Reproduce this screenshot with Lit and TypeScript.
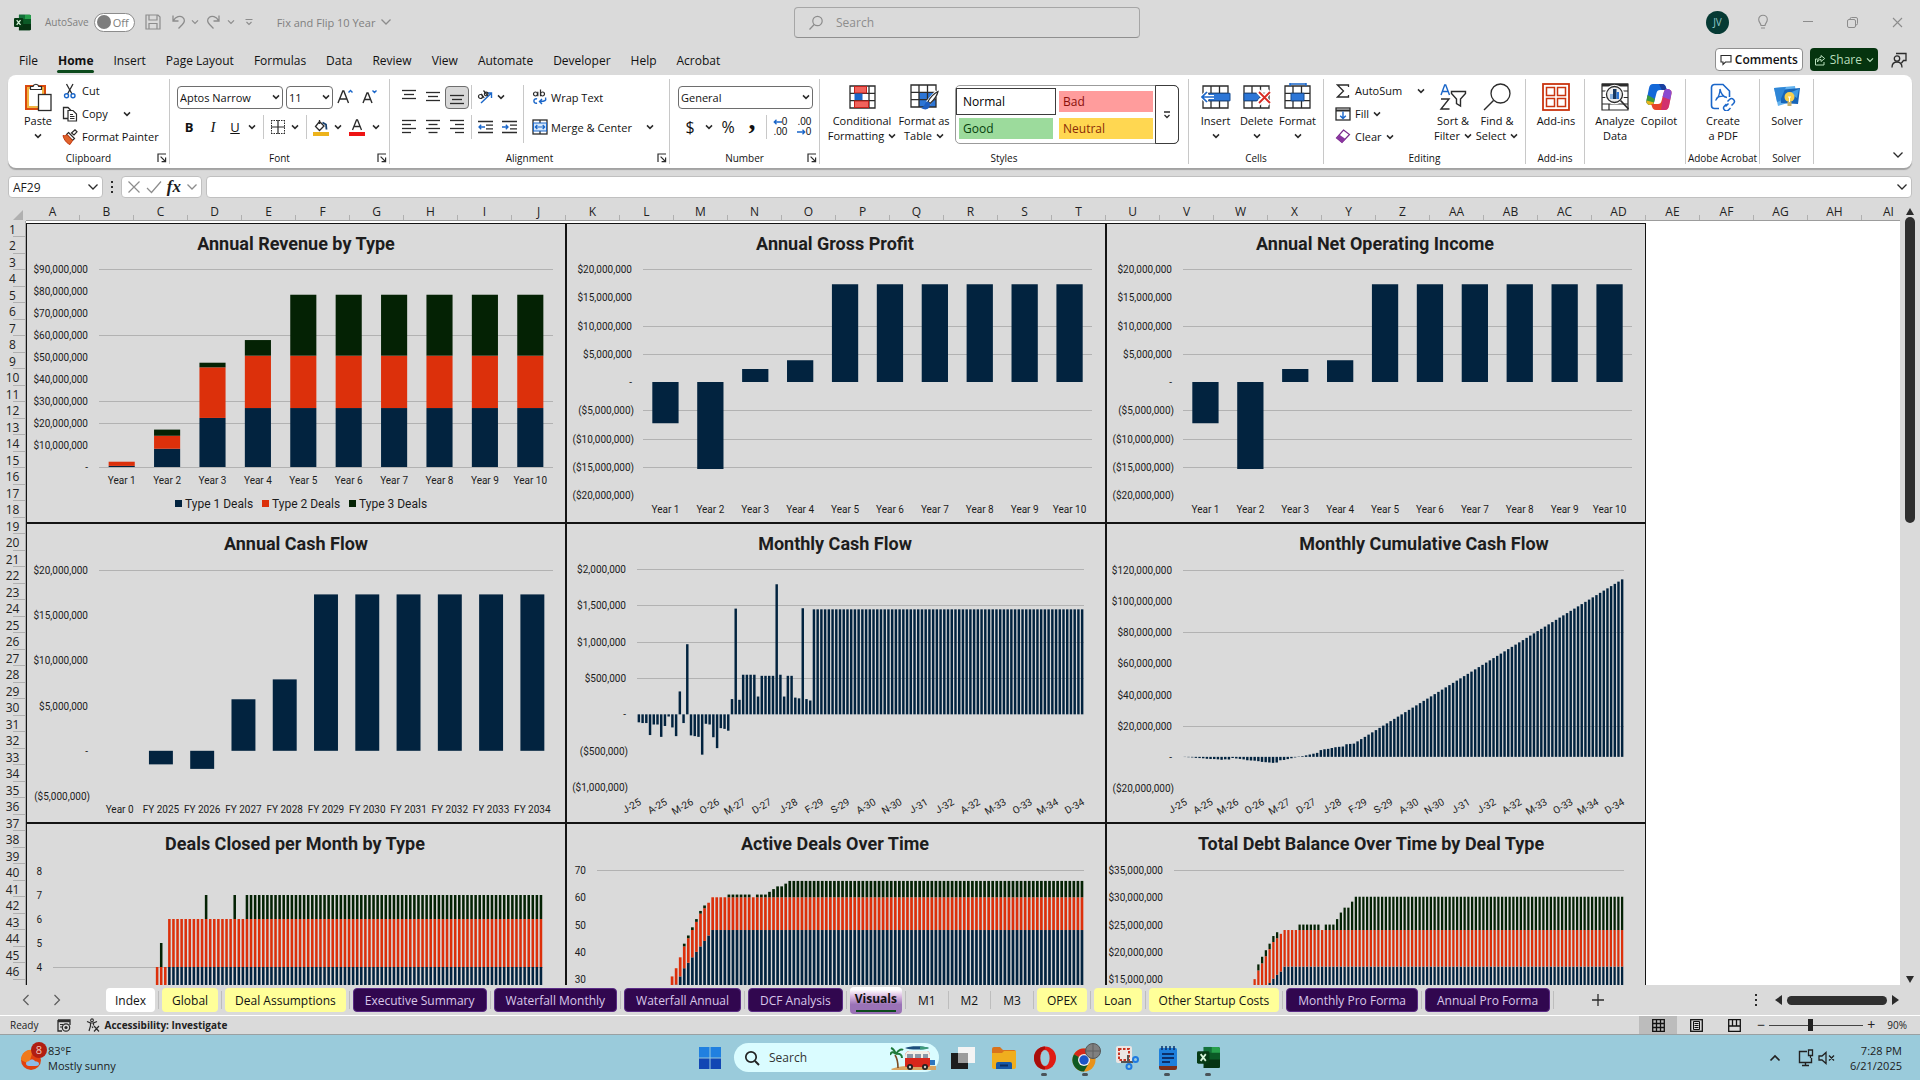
import { LitElement, html, svg, css, nothing } from "lit";
import type { TemplateResult, SVGTemplateResult } from "lit";
import { customElement, property, state } from "lit/decorators.js";
import { classMap } from "lit/directives/class-map.js";

/* ---------- icons ---------- */

const icon = (w: number, h: number, body: SVGTemplateResult) =>
  html`<svg class="ic" width=${w} height=${h} viewBox="0 0 ${w} ${h}" fill="none" aria-hidden="true">${body}</svg>`;

const K = "#2b2b2b";
const BLUE = "#1a66c9";

const chev = () => icon(8, 6, svg`<path d="M1 1.4 4 4.4 7 1.4" stroke=${K} stroke-width="1.5"/>`);
const chevThin = (c: string) => icon(8, 6, svg`<path d="M1 1.4 4 4.4 7 1.4" stroke=${c} stroke-width="1.2"/>`);
const chevBig = (c = K) => icon(12, 8, svg`<path d="M1.5 1.5 6 6 10.5 1.5" stroke=${c} stroke-width="1.3"/>`);
const launcher = () =>
  icon(10, 10, svg`<path d="M1 9V1h8M3.6 3.6 8 8M8.6 4.6v4h-4" stroke=${K} stroke-width="1.2"/>`);

const excelLogo = (s: number) =>
  html`<svg class="ic" width=${s} height=${s} viewBox="0 0 24 24" aria-hidden="true">
    <path d="M7 1h15a2 2 0 0 1 2 2v18a2 2 0 0 1-2 2H7z" fill="#0b5a26"/>
    <path d="M15 1h7a2 2 0 0 1 2 2v4h-9z" fill="#27a04c"/><path d="M7 1h8v6H7z" fill="#14713a"/>
    <path d="M7 14h17v7a2 2 0 0 1-2 2H7z" fill="#063312"/>
    <rect x="0" y="5.500" width="13" height="13" rx="1.500" fill="#063a14"/>
    <path d="m3.800 8.500 5.400 7M9.200 8.500l-5.400 7" stroke="#d9f5dc" stroke-width="1.800"/>
  </svg>`;

const G = "#8c8c8c";
const I = {
  save: () => icon(16, 16, svg`<path d="M1 1h12l2 2v12H1zM4 1v5h8V1M4 15V9.500h8V15" stroke=${G} stroke-width="1.200"/>`),
  undo: () => icon(16, 16, svg`<path d="M2 1.500V7h5.500M2.300 6.700C5 2.500 9 1.300 11.600 3.300c2.800 2.200 2 5-.2 7.200L7.500 14.500" stroke=${G} stroke-width="1.300"/>`),
  redo: () => icon(16, 16, svg`<path d="M14 1.500V7H8.500M13.700 6.700C11 2.500 7 1.300 4.400 3.300c-2.800 2.200-2 5 .2 7.200l3.900 4" stroke=${G} stroke-width="1.300"/>`),
  custom: () => icon(8, 8, svg`<path d="M.500 1.500h7M1.500 4 4 6.500 6.500 4" stroke=${G} stroke-width="1.100"/>`),
  lens: () => icon(16, 16, svg`<circle cx="9.500" cy="6" r="4.700" stroke=${G} stroke-width="1.200"/><path d="M6.200 9.500 1.500 14.500" stroke=${G} stroke-width="1.200"/>`),
  bulb: () => icon(12, 16, svg`<path d="M4 11.500C4 9.500 1.700 8.500 1.700 5.500a4.300 4.300 0 0 1 8.600 0c0 3-2.300 4-2.300 6zM4 14h4" stroke=${G} stroke-width="1.100"/>`),
  min: () => icon(10, 10, svg`<path d="M0 4.500h10" stroke=${G}/>`),
  restore: () => icon(11, 11, svg`<rect x=".500" y="2.500" width="8" height="8" rx="1.500" stroke=${G}/><path d="M3 2.500V2a1.500 1.500 0 0 1 1.500-1.500H9A1.500 1.500 0 0 1 10.500 2v4.500A1.500 1.500 0 0 1 9 8" stroke=${G}/>`),
  close: () => icon(11, 11, svg`<path d="m1 1 9 9M10 1l-9 9" stroke=${G} stroke-width="1.100"/>`),
  comment: () => icon(12, 12, svg`<path d="M1 1.500h10v6.500H5.500L3 10.500V8H1z" stroke=${K} stroke-width="1.100"/>`),
  share: () => icon(12, 12, svg`<path d="M3.500 5H1.500v6h8.500V8M7 1.500l3.700 3L7 7.500v-2C5 5.500 4 6.500 3.500 8 3.500 5 5 3.500 7 3.300z" stroke="#b9dfbd" stroke-width="1"/>`),
  person: () => icon(16, 16, svg`<circle cx="6" cy="6.500" r="2.700" stroke=${K} stroke-width="1.300"/><path d="M1 15.500c0-3.500 2-5.500 5-5.500s5 2 5 5.500M5 1.500h10v7h-2.500L10.500 11" stroke=${K} stroke-width="1.300"/>`),

  paste: () => icon(28, 30, svg`<rect x="2" y="4" width="19" height="23" fill="#fff" stroke="#d9490f" stroke-width="2"/><rect x="4" y="6" width="15" height="19" stroke="#f0b440" stroke-width="2"/><path d="M6.500 7.500V4.500h2.500a3 3 0 0 1 5.800 0h2.700v3z" fill="#fff" stroke=${K} stroke-width="1.200"/><rect x="14.500" y="12.500" width="12.500" height="16" fill="#fff" stroke=${K} stroke-width="1.300"/>`),
  cut: () => icon(14, 16, svg`<path d="M3.500 1 9 11M10 1 4.500 11" stroke=${K} stroke-width="1.300"/><circle cx="3.500" cy="12.800" r="2" stroke=${BLUE} stroke-width="1.400"/><circle cx="10" cy="12.800" r="2" stroke=${BLUE} stroke-width="1.400"/>`),
  copy: () => icon(16, 16, svg`<path d="M6 12.500H1.500v-11H6l3 3" stroke=${K} stroke-width="1.300"/><path d="M6 4.500h5l3.500 3.500v7H6zM8 8.500h3M8 10.500h4.500M8 12.500h4.500" stroke=${K} stroke-width="1.200"/>`),
  painter: () => icon(16, 16, svg`<path d="M9.500 4 13 .8l2 2L12 6z" stroke=${K} stroke-width="1.200" fill="#fff"/><path d="m6.500 3.500 6 6-2 2-6-6z" fill="#fff" stroke=${K} stroke-width="1.200"/><path d="M1 6.500c2 .5 3 0 4-1l5.500 6-2.500 4C5 14.500 2 11 1 6.500z" fill="#e0632b" stroke="#c2360c"/>`),
  grow: (up: boolean) => icon(16, 18, svg`<path d=${up ? "M1 15 5.800 3h1L11.500 15M2.800 11h7" : "M2 15 6 5h1l4 10M3.500 11.500h6"} stroke=${K} stroke-width="1.400"/><path d=${up ? "M11.500 4.500 13.500 2.500l2 2" : "M11.500 2.500l2 2 2-2"} stroke=${BLUE} stroke-width="1.400"/>`),
  borders: () => icon(16, 16, svg`<path d="M1 1.500h14M1 14.500h14M1.500 1v14M14.500 1v14" stroke=${K} stroke-dasharray="1.500 1"/><path d="M8 1v14M1 8h14" stroke=${K} stroke-width="1.200"/>`),
  fill: () => icon(16, 17, svg`<path d="M6.500 2.500 11 7l-4.500 4.500L2.500 7.500zM6.500 1v4" stroke=${K} stroke-width="1.300"/><path d="M9.500 3.500 13 5.500l.5 5" stroke="#16406f" stroke-width="1.800"/><rect y="13" width="16" height="4" fill="#edb31b"/>`),
  fontColor: () => icon(16, 17, svg`<path d="M3.500 11 7.500 1h1l4 10M5 7.500h6" stroke=${K} stroke-width="1.300"/><rect y="13" width="16" height="4" fill="#ee1414"/>`),
  lines: (ws: number[], align: string) =>
    icon(14, ws.length * 4, svg`${ws.map((w, i) => {
      const x = align === "l" ? 0 : align === "r" ? 14 - w : (14 - w) / 2;
      return svg`<path d="M${x} ${i * 4 + 1.5}h${w}" stroke=${K} stroke-width="1.300"/>`;
    })}`),
  orient: () => icon(16, 16, svg`<path d="M4 14 14 4.500M14.500 9V4H9.500" stroke=${BLUE} stroke-width="1.400"/><circle cx="3.500" cy="7.500" r="2" stroke=${K} stroke-width="1.200"/><path d="m4.200 4.800 3 4M6.500 1.500l4.200 5.200" stroke=${K} stroke-width="1.200"/><circle cx="9.200" cy="5" r="1.800" stroke=${K} stroke-width="1.200"/>`),
  indent: (out: boolean) => icon(15, 14, svg`<path d="M0 1.500h15M8 5.200h7M8 8.800h7M0 12.500h15" stroke=${K} stroke-width="1.300"/><path d=${out ? "M7 7H1.200M3.200 4.800 1 7l2.200 2.200" : "M0 7h5.800M3.800 4.800 6 7 3.800 9.200"} stroke=${BLUE} stroke-width="1.300"/>`),
  wrap: () => icon(16, 16, svg`<circle cx="3.500" cy="5" r="2" stroke=${K} stroke-width="1.200"/><path d="M5.800 2.800v4.400M8.500.5v6.700" stroke=${K} stroke-width="1.200"/><circle cx="10.500" cy="5" r="2" stroke=${K} stroke-width="1.200"/><path d="M5 10a2.200 2.200 0 1 0 0 4M13.500 8.500c1 3-.5 4-5.500 4M10 10l-2.500 2.500L10 15" stroke=${BLUE} stroke-width="1.400"/>`),
  merge: () => icon(16, 16, svg`<rect x="1" y="1" width="14" height="14" stroke=${K} stroke-width="1.300"/><path d="M8 1v3M8 12v3" stroke=${K} stroke-width="1.300"/><rect x="1.500" y="4" width="13" height="8" fill="#d6e8fb" stroke=${BLUE}/><path d="M3.500 8h9M5.300 6 3.300 8l2 2M10.700 6l2 2-2 2" stroke=${BLUE} stroke-width="1.200"/>`),
  arrowL: () => icon(9, 6, svg`<path d="M9 3H1M3.500.7 1.200 3l2.300 2.300" stroke=${BLUE} stroke-width="1.300"/>`),
  arrowR: () => icon(9, 6, svg`<path d="M0 3h8M5.500.7 7.800 3 5.500 5.300" stroke=${BLUE} stroke-width="1.300"/>`),
  condFmt: () => icon(27, 24, svg`<path d="M1 1h25v22H1zM1 8.300h25M1 15.600h25M7 1v22M20 1v22" stroke=${K} stroke-width="1.300"/><rect x="5.500" y="1.500" width="12" height="6.500" fill="#f0635c" stroke="#c4221c"/><rect x="5.500" y="8.500" width="8" height="6.500" fill="#1a66c9"/><rect x="5.500" y="16" width="14" height="6.500" fill="#f0635c" stroke="#c4221c"/>`),
  fmtTable: () => icon(29, 27, svg`<rect x="9" y="8" width="17" height="15" fill="#2d76d6"/><path d="M1 1h25v22H1zM1 8.300h25M1 15.600h25M9 1v22M17.500 1v22" stroke=${K} stroke-width="1.300"/><path d="M27.500 8 18 19" stroke="#fff" stroke-width="5"/><path d="M28 7.500c-4 2-8 6.500-10 10l2 2c3.500-3 7-7.500 8-12z" fill="#fff" stroke=${K} stroke-width="1.200"/><path d="M18 17.500c-4 .5-2.500 5-7 6.500 4 2.500 9 2 9-4.500z" fill="#1f5fc0"/>`),
  cells: (kind: string) => icon(30, 28, svg`<path d="M2 3h25v22H2zM2 10.300h25M2 17.600h25M10 3v22M18.500 3v22" stroke=${K} stroke-width="1.300"/>
    ${kind === "insert" ? svg`<path d="M8 10.300h21v7.500H8z" fill="#2d76d6" stroke="#174c91"/><path d="M13 14H1.500M6 9l-5 5 5 5" stroke="#fff" stroke-width="4"/><path d="M13 14H1.500M6 9l-5 5 5 5" stroke=${BLUE} stroke-width="1.700"/>` : nothing}
    ${kind === "delete" ? svg`<path d="M2 10.300h13l3 3.700-3 3.700H2z" fill="#2d76d6" stroke="#174c91"/><path d="m16 8 12 13M28 8 16 21" stroke="#fff" stroke-width="5"/><path d="m17 9 11 11M28 9 17 20" stroke="#d92b23" stroke-width="1.800"/>` : nothing}
    ${kind === "format" ? svg`<path d="M8 10.300h13v7.500H8z" fill="#2d76d6" stroke="#174c91"/><path d="M7 0v3M23 0v3M7 1h16" stroke=${BLUE} stroke-width="1.500"/>` : nothing}`),
  sigma: () => icon(14, 14, svg`<path d="M12.500 3V1h-11l6 6-6 6h11v-2" stroke=${K} stroke-width="1.300"/>`),
  fillDown: () => icon(16, 14, svg`<rect x="1" y="1" width="14" height="12" stroke=${K} stroke-width="1.300"/><path d="M1 3.500h14" stroke=${K} stroke-width="2"/><path d="M8 4.500v7M5.200 8.700 8 11.500l2.800-2.800" stroke=${BLUE} stroke-width="1.400"/>`),
  eraser: () => icon(16, 15, svg`<path d="M8.500 1 14.500 5.500 7 13.500 1.500 9z" fill="#fff" stroke="#7a2a8c" stroke-width="1.200"/><path d="M4.500 5.800 10.500 10 7 13.800 1.500 9z" fill="#8a35a0"/>`),
  sort: () => icon(28, 28, svg`<path d="M2 12 5.700 2h1L10.500 12M3.300 8.500h6" stroke=${BLUE} stroke-width="1.400"/><path d="M2 16h8l-8 10h8.500" stroke=${K} stroke-width="1.400"/><path d="M12.500 8.500h14v2L21.500 16v7l-4-2.500V16l-5-5.500z" stroke=${K} stroke-width="1.400"/>`),
  find: () => icon(28, 28, svg`<circle cx="17.500" cy="10.500" r="9.500" stroke=${K} stroke-width="1.300"/><path d="M10.500 17.500 1 27" stroke=${K} stroke-width="1.500"/>`),
  addins: () => icon(28, 28, svg`<rect x="1" y="1" width="26" height="26" stroke="#c9340f" stroke-width="1.800"/><g stroke="#c9340f" stroke-width="1.500"><rect x="4.500" y="4.500" width="8" height="8"/><rect x="15.500" y="4.500" width="8" height="8"/><rect x="4.500" y="15.500" width="8" height="8"/><rect x="15.500" y="15.500" width="8" height="8"/></g>`),
  analyze: () => icon(28, 28, svg`<path d="M1 1h26v26H1zM1 8h26M1 14.500h26M1 21h26M8 21v6" stroke=${K} stroke-width="1.200"/><path d="M1 2h26" stroke=${K} stroke-width="3"/><circle cx="13.500" cy="11.500" r="8" fill="#f4f4f4" stroke="#fff" stroke-width="3.500"/><circle cx="13.500" cy="11.500" r="8" fill="#eee" stroke=${K} stroke-width="1.300"/><path d="M9 16v-5h3v5z" fill="#8db3df"/><path d="M12 16V6h3.500v10z" fill="#17375f"/><path d="M15.500 16V9H18v7z" fill="#2d76d6"/><path d="m19.500 17.500 8 8.500" stroke=${K} stroke-width="1.800"/>`),
  copilot: () => icon(28, 28, svg`<path d="M8 1h9c2.500 0 3.300 1.500 4 3.500l.8 2.500H15c-2 0-3 1-3.500 3L9 19.500c-.5 1.500-1.500 2.500-3 2.500-3 0-5-1.500-4.500-4.500L4 5c.6-2.500 1.800-4 4-4z" fill="#1468d8"/><path d="M8 1h9c2.500 0 3.300 1.500 4 3.500l.8 2.500h-5L14 1z" fill="#1b3f9e"/><path d="M2.500 12 9.800 16 9 19.500c-.5 1.500-1.500 2.500-3 2.500-3 0-5-1.500-4.500-4.500z" fill="#3f9a3a"/><path d="M1.500 17.500 9 19.500c-.5 1.500-1.500 2.500-3 2.500-3 0-5-1.500-4.500-4.500z" fill="#e8b41c"/><path d="M20 27h-9c-2.500 0-3.300-1.500-4-3.500L6.200 21H13c2 0 3-1 3.500-3L19 8.500C19.500 7 20.500 6 22 6c3 0 5 1.500 4.500 4.500L24 23c-.6 2.500-1.800 4-4 4z" fill="#e8462c"/><path d="M26.500 10.500 25.200 17l-7.700-3L19 8.500C19.500 7 20.500 6 22 6c3 0 5 1.500 4.500 4.500z" fill="#8a4bd0"/><path d="m25.200 17-1.200 6c-.6 2.500-1.800 4-4 4h-4l2-13z" fill="#c8268a" opacity=".7"/>`),
  pdf: () => icon(26, 28, svg`<path d="M9 25.500H4.500a3 3 0 0 1-3-3V4.500a3 3 0 0 1 3-3H13L19.500 8v6" stroke=${BLUE} stroke-width="1.600"/><path d="M10 6c0 5-2 9-4.500 11.500M10 6c1 5 3.500 8 7 8.500M6 15.500c3-2 7-3 10-1.500" stroke=${BLUE} stroke-width="1.300"/><path d="m15.500 23.500 3-3M17.500 18.500l2-2a2.700 2.700 0 0 1 4 4l-2 2M16.500 21l-2 2a2.700 2.700 0 0 0 4 4l2-2" stroke=${BLUE} stroke-width="1.500"/>`),
  solver: () => icon(28, 24, svg`<path d="M1 3 22 1l2 14-19 6z" fill="#63b2ee"/><path d="m6 5 21-2-2 16-17-1z" fill="#1765b8"/><path d="M1 3l12-1-6 14-3 1z" fill="#2f86d6"/><path d="m16 8 10-4-2 9z" fill="#3e9be4"/><circle cx="16.500" cy="12" r="5" fill="#f8cf4d"/><path d="M14.500 17h4v4h-4z" fill="#c8b06a"/><path d="M15 12h3M16.500 12v5" stroke="#fff"/>`),

  cancel: () => icon(14, 14, svg`<path d="m1.500 1.500 11 11M12.500 1.500l-11 11" stroke=${G} stroke-width="1.200"/>`),
  check: () => icon(16, 14, svg`<path d="m1 8 4.500 4.500L15 1.500" stroke=${G} stroke-width="1.200"/>`),
  dots: () => icon(4, 14, svg`<path d="M1 1h2v2H1zM1 6h2v2H1zM1 11h2v2H1z" fill=${K}/>`),
  navL: () => icon(8, 12, svg`<path d="M6.500 1 1.500 6l5 5" stroke="#5b5b5b" stroke-width="1.200"/>`),
  navR: () => icon(8, 12, svg`<path d="m1.500 1 5 5-5 5" stroke="#5b5b5b" stroke-width="1.200"/>`),
  plus: () => icon(12, 12, svg`<path d="M6 0v12M0 6h12" stroke=${K} stroke-width="1.300"/>`),
  triL: () => icon(7, 10, svg`<path d="M7 0v10L0 5z" fill=${K}/>`),
  triR: () => icon(7, 10, svg`<path d="M0 0v10l7-5z" fill=${K}/>`),
  triU: () => icon(8, 7, svg`<path d="M0 7h8L4 0z" fill=${K}/>`),
  triD: () => icon(8, 7, svg`<path d="M0 0h8L4 7z" fill=${K}/>`),

  macro: () => icon(14, 13, svg`<path d="M1 1h12v5M1 1v11h4M1 2.500h12" stroke=${K} stroke-width="1.300"/><path d="M3 5.500h3M3 8h2" stroke=${K}/><circle cx="9" cy="8.500" r="3.700" stroke=${K} stroke-width="1.200"/><circle cx="9" cy="8.500" r="1.600" fill=${K}/>`),
  access: () => icon(14, 14, svg`<circle cx="6" cy="2.300" r="1.400" stroke=${K} stroke-width="1.100"/><path d="M1 3.500 4.500 5v3L3 13M11 3.500 7.500 5v2.500M4.500 5h3M6 8.500 7 10M8 8l5 5.500M13 8l-5 5.500" stroke=${K} stroke-width="1.200"/>`),
  viewNormal: () => icon(13, 13, svg`<path d="M.7.7h11.600v11.600H.7zM.7 4.500h11.600M.7 8.500h11.600M4.500.7v11.600M8.500.7v11.600" stroke="#111" stroke-width="1.300"/>`),
  viewPage: () => icon(13, 13, svg`<rect x=".700" y=".700" width="11.600" height="11.600" stroke="#111" stroke-width="1.300"/><path d="M3.500 2.500h6v8h-6zM4.500 4.500h4M4.500 6.500h4M4.500 8.500h4" stroke="#111"/>`),
  viewBreak: () => icon(13, 13, svg`<path d="M.7.7h11.600v11.600H.7zM4.500.7v6M8.500.7v6M.7 7h11.600" stroke="#111" stroke-width="1.300"/>`),

  sun: () => icon(26, 32, svg`<circle cx="12" cy="20" r="10" fill="#e0400f"/><path d="M2 20A10 10 0 0 1 14 10L10 24z" fill="#f07a1a"/><path d="M10 26c-2 0-3-1-3-2.500S8.500 21 10 21.300c1-2.500 5-2.500 6 0 2.500 0 4 1 4 2.500S19 26 17 26z" fill="#8dbbe8"/>`),
  winLogo: () => icon(24, 24, svg`<path d="M1 1h10.500v10.500H1zM12.500 1H23v10.500H12.500z" fill="#2080e0"/><path d="M1 12.500h10.500V23H1zM12.500 12.500H23V23H12.500z" fill="#1146b4"/>`),
  lensBold: () => icon(16, 16, svg`<circle cx="7" cy="7" r="5.200" stroke="#222" stroke-width="1.700"/><path d="m11 11 4 4" stroke="#222" stroke-width="2"/>`),
  van: () => icon(46, 26, svg`<path d="M1 24c8-4 30-4 45-3v4H2z" fill="#d9a562"/><path d="M34 15h11v5H34z" fill="#2b76c0"/><path d="M8 23c0-6-1-10-3-13" stroke="#7a4a22" stroke-width="1.600"/><path d="M6 9C3 6 1 7 0 10M6 9C4 4 1 3 1 3M6 9c3-5 6-5 7-4M6 9c4-1 6 1 6 4" stroke="#1f7a3a" stroke-width="2"/><path d="M15 12c0-5 2-6 6-6h15c3 0 4 2 4 5v9c0 1-1 2-2 2H16c-1 0-1-1-1-2z" fill="#d8271b"/><path d="M15 12c0-5 2-6 6-6h15c3 0 4 2 4 5v2H15z" fill="#f3efe6"/><path d="M17 9h6v4h-6zM25 9h6v4h-6zM33 9h5v4h-5z" fill="#8a98a6"/><circle cx="20" cy="22" r="3" fill="#222"/><circle cx="35" cy="22" r="3" fill="#222"/><circle cx="20" cy="22" r="1.200" fill="#ccc"/><circle cx="35" cy="22" r="1.200" fill="#ccc"/><path d="M15 3c5-2.500 18-2.500 24 0-6 2-19 2-24 0z" fill="#1c4e7c"/><path d="M30 1.500c4 0 7 .5 9 1.500-2 1-5 1.500-9 1.500z" fill="#3d9c7a"/>`),
  taskView: () => icon(24, 22, svg`<rect x="7" y="0" width="17" height="16" fill="#f4f4f4"/><rect x="0" y="6" width="17" height="16" fill="#1d1d1d"/><rect x="7" y="6" width="10" height="10" fill="#9c9c9c"/>`),
  folder: () => icon(24, 22, svg`<path d="M0 2a2 2 0 0 1 2-2h6l3 3h11a2 2 0 0 1 2 2v4H0z" fill="#d9731c"/><path d="M0 6h10l2-2h12v16a2 2 0 0 1-2 2H2a2 2 0 0 1-2-2z" fill="#f0ae1e"/><path d="M4 22v-5a2 2 0 0 1 2-2h12a2 2 0 0 1 2 2v5z" fill="#1758a8"/><path d="M8 18.500h8" stroke="#0c2d60" stroke-width="2"/>`),
  opera: () => icon(22, 24, svg`<ellipse cx="11" cy="12" rx="11" ry="11.500" fill="#e01b14"/><path d="M11 .5C5 .500 0 5.500 0 12s5 11.500 11 11.500V21c-3-1-5-4.500-5-9s2-8 5-9z" fill="#a80d0a"/><ellipse cx="11" cy="12" rx="4.600" ry="8" fill="#9acbdb"/>`),
  chrome: () => icon(30, 30, svg`<circle cx="13" cy="17" r="11.500" fill="#e8921a"/><path d="M13 17 3 11.200A11.500 11.500 0 0 1 23 11.200H13z" fill="#d6281a"/><path d="M3 11.200A11.500 11.500 0 0 0 13 28.500l5-8.700-5-2.800z" fill="#0f5a22"/><circle cx="13" cy="17" r="6" fill="#eee"/><circle cx="13" cy="17" r="4.700" fill="#1c55c8"/><circle cx="22" cy="8" r="7.500" fill="#808080" stroke="#555"/><path d="M15 8h14M22 1v14" stroke="#606060"/>`),
  snip: () => icon(24, 24, svg`<rect x="1" y="0" width="16" height="17" rx="2" fill="#ece6e4"/><path d="M4 3h10v11H4z" stroke="#c93421" stroke-width="2" stroke-dasharray="2.500 1.500"/><path d="M13 9v8M6 16h12" stroke="#555" stroke-width="2"/><circle cx="20.500" cy="13.500" r="2.500" stroke="#1f7ae0" stroke-width="2"/><circle cx="14" cy="20.500" r="2.500" stroke="#1f7ae0" stroke-width="2"/>`),
  notepad: () => icon(20, 24, svg`<rect x="1" y="2" width="18" height="20" rx="1.500" fill="#1d7fdc"/><path d="M1 20h18v2a2 2 0 0 1-2 2H3a2 2 0 0 1-2-2z" fill="#7a2f1b"/><path d="M4 8h12M4 12h12M4 16h8" stroke="#0c2f6a" stroke-width="1.800"/><path d="M4 0v4M8 0v4M12 0v4M16 0v4" stroke="#0c2f6a" stroke-width="1.500"/>`),
  up: () => icon(12, 8, svg`<path d="M1.500 6.500 6 2l4.500 4.500" stroke="#222" stroke-width="1.700"/>`),
  net: () => icon(18, 18, svg`<path d="M10 2.500H2.500v11h12V9M8.500 13.500v3M5 16.500h7" stroke="#222" stroke-width="1.400"/><path d="M11.500 1h4v5.500h-4zM13.500 6.500V9" stroke="#222" stroke-width="1.300"/>`),
  mute: () => icon(18, 14, svg`<path d="M1 5h3l4-3.500v11L4 9H1zM11 4.500l5 5M16 4.500l-5 5" stroke="#222" stroke-width="1.300"/>`),
};

/* ---------- shared text and control styles ---------- */

const base = css`
  :host, * { box-sizing: border-box; }
  button, input, select { font: inherit; color: inherit; background: none; border: 0; padding: 0; margin: 0; }
  button { display: flex; align-items: center; justify-content: center; white-space: nowrap; cursor: pointer; }
  .ic { display: block; flex: none; }
`;

/* ---------- charts ---------- */

const NAVY = "#02233f";
const ORANGE = "#dc300b";
const GREEN = "#042204";

interface ChartSpec {
  title: string;
  titleX: number;
  plot: { left: number; right: number; top: number; bottom: number };
  min: number;
  max: number;
  step: number;
  grid: number[];
  fmt: (v: number) => string;
  cats: string[];
  every?: number;
  tilt?: boolean;
  hideCats?: boolean;
  barRatio: number;
  series: { name: string; color: string; values: number[] }[];
  legend?: boolean;
}

const money = (unit: number) => (v: number) => {
  if (v === 0) return "-";
  const s = "$" + Math.round(Math.abs(v) * unit).toLocaleString("en-US");
  return v < 0 ? `(${s})` : s;
};

@customElement("bar-chart")
class BarChart extends LitElement {
  @property({ attribute: false }) spec!: ChartSpec;

  static styles = css`
    :host { display: block; box-sizing: border-box; background: #dadada; border: 1px solid #141414; overflow: hidden; }
    svg { display: block; }
    .title { font: 700 18px Roboto, "Liberation Sans", sans-serif; fill: #1d1d1d; }
    .tick { font: 10px Roboto, "Liberation Sans", sans-serif; fill: #1c1c1c; }
    .leg { font: 12px Roboto, "Liberation Sans", sans-serif; fill: #1c1c1c; }
  `;

  render() {
    const s = this.spec;
    const { left, right, top, bottom } = s.plot;
    const y = (v: number) => bottom - ((v - s.min) / (s.max - s.min)) * (bottom - top);
    const pitch = (right - left) / s.cats.length;
    const bw = pitch * s.barRatio;
    const ticks: number[] = [];
    for (let v = s.min; v <= s.max; v += s.step) ticks.push(Math.round(v * 100) / 100);
    const sums = s.cats.map(() => 0);
    return html`<svg width="538" height="298" viewBox="1 1 538 298" role="img" aria-label=${s.title}>
      ${svg`
      <text class="title" x=${s.titleX} y="27" text-anchor="middle">${s.title}</text>
      ${s.grid.map((g) => svg`<rect x=${left} y=${Math.round(y(g))} width=${right - left} height="1" fill="#b2b2b2"/>`)}
      ${ticks.map((t) => svg`<text class="tick" x=${left - (t < 0 ? 9 : 11)} y=${y(t) + 4} text-anchor="end">${s.fmt(t)}</text>`)}
      ${s.series.map((ser) => ser.values.map((v, i) => {
        if (!v) return nothing;
        const a = y(sums[i]);
        sums[i] += v;
        const b = y(sums[i]);
        return svg`<rect x=${left + pitch * (i + 0.5) - bw / 2} y=${Math.min(a, b)} width=${bw} height=${Math.abs(a - b)} fill=${ser.color}/>`;
      }))}
      ${s.hideCats ? nothing : s.cats.map((c, i) => {
        if (i % (s.every ?? 1)) return nothing;
        const x = left + pitch * (i + 0.5);
        return s.tilt
          ? svg`<text class="tick" transform="translate(${x + 3} 281) rotate(-30)" text-anchor="end">${c}</text>`
          : svg`<text class="tick" x=${x} y=${s.legend ? 261 : 290} text-anchor="middle">${c}</text>`;
      })}
      ${s.legend ? s.series.map((ser, i) => svg`<rect x=${149 + i * 87} y="277" width="7" height="7" fill=${ser.color}/><text class="leg" x=${159 + i * 87} y="285">${ser.name}</text>`) : nothing}
      `}
    </svg>`;
  }
}

const rep = (v: number, n: number) => Array<number>(n).fill(v);
const diff = (a: number[], b: number[]) => a.map((v, i) => Math.max(0, v - b[i]));
const years = Array.from({ length: 10 }, (_, i) => `Year ${i + 1}`);
const months = Array.from({ length: 120 }, (_, i) => `${"JFMAMJJASOND"[i % 12]}-${25 + Math.floor(i / 12)}`);

const profit = [-7.3, -15.4, 2.3, 3.85, ...rep(17.3, 6)];
const monthly = [
  -0.11, -0.12, -0.12, -0.285, -0.14, -0.14, -0.31, -0.16, -0.03, -0.18, -0.3, 0.315, -0.12, 0.965, -0.29, -0.3,
  -0.31, -0.555, -0.13, -0.14, -0.315, -0.465, -0.19, -0.2, -0.225, 0.21, 1.455, 0.2, ...rep(0.545, 4), 0.245,
  ...rep(0.53, 4), 1.79, 0.545, 0.245, 0.53, 0.53, 0.23, 0.22, 1.46, 0.21, 0.19, ...rep(1.445, 73),
];
let running = 0;
const cumulative = monthly.map((v) => (running += v));

const closed1 = [...rep(0, 25), 2, 2, 2, ...rep(4, 92)];
const closed2 = [...rep(0, 25), 4, 4, 4, ...rep(6, 92)];
const closed3 = closed2.map((v, i) => (i === 26 ? 5 : i === 37 || i === 44 || i >= 47 ? 7 : v));

const act1 = [...rep(0, 18), 25, 28, 31, 34, 36, 38, 40, 42, 44, 46, ...rep(48, 92)];
const act2 = [...rep(0, 18), 31, 34, 38, 42, 45, 48, 51, 54, 56, 58, ...rep(60, 92)];
const act3 = [...rep(0, 18), 31, 34, 38, 43, 46, 49, 52, 55, 57, 58, ...rep(60, 4), ...rep(61, 6), 60, 61, 61, 61, 62, 63, 64, 64, 65, ...rep(66, 73)];

const debt1 = [...rep(0, 21), 11, 12, 13, 13.6, 14.3, 15.1, 15.8, 16.4, ...rep(17.3, 91)];
const debt2 = [...rep(0, 21), 15, 16.6, 17.9, 19.2, 20.5, 21.8, 22.5, 23.3, ...rep(24, 91)];
const debt3 = [...rep(0, 21), 15, 17.7, 19.1, 20.3, 21.5, 22.9, 23.6, 23.3, ...rep(24, 4), ...rep(25, 6), 24, 25, 25, 25, 26, 27.2, 28.1, 28.1, 29.2, ...rep(30.1, 72)];

const stack = (a: number[], b: number[], c: number[]) => [
  { name: "Type 1 Deals", color: NAVY, values: a },
  { name: "Type 2 Deals", color: ORANGE, values: diff(b, a) },
  { name: "Type 3 Deals", color: GREEN, values: diff(c, b) },
];
const single = (name: string, values: number[]) => [{ name, color: NAVY, values }];
const M = 1_000_000;

const charts: ChartSpec[] = [
  { title: "Annual Revenue by Type", titleX: 270, plot: { left: 73, right: 527, top: 46, bottom: 244 }, min: 0, max: 90, step: 10, grid: [90, 60, 30, 20, 0], fmt: money(M), cats: years, barRatio: 0.575, legend: true,
    series: stack([0.5, 8.3, 22.3, ...rep(26.8, 7)], [2.4, 14.2, 45.3, ...rep(50.6, 7)], [2.4, 17, 47.4, 57.7, ...rep(78.3, 6)]) },
  { title: "Annual Gross Profit", titleX: 269, plot: { left: 77, right: 526, top: 46, bottom: 272 }, min: -20, max: 20, step: 5, grid: [20, 10, 5, -5, -10, -15], fmt: money(M), cats: years, barRatio: 0.585, series: single("Gross profit", profit) },
  { title: "Annual Net Operating Income", titleX: 269, plot: { left: 77, right: 526, top: 46, bottom: 272 }, min: -20, max: 20, step: 5, grid: [20, 10, 5, -5, -10, -15], fmt: money(M), cats: years, barRatio: 0.585, series: single("Net operating income", profit) },
  { title: "Annual Cash Flow", titleX: 270, plot: { left: 73, right: 527, top: 47, bottom: 273 }, min: -5, max: 20, step: 5, grid: [20], fmt: money(M), cats: ["Year 0", ...Array.from({ length: 10 }, (_, i) => `FY ${2025 + i}`)], barRatio: 0.58, series: single("Cash flow", [0, -1.5, -2, 5.7, 7.9, ...rep(17.3, 6)]) },
  { title: "Monthly Cash Flow", titleX: 269, plot: { left: 71, right: 518, top: 46, bottom: 264 }, min: -1, max: 2, step: 0.5, grid: [2, 1.5, 1, 0.5], fmt: money(M), cats: months, every: 7, tilt: true, barRatio: 0.66, series: single("Cash flow", monthly) },
  { title: "Monthly Cumulative Cash Flow", titleX: 318, plot: { left: 77, right: 518, top: 47, bottom: 265 }, min: -20, max: 120, step: 20, grid: [120, 80, 20], fmt: money(M), cats: months, every: 7, tilt: true, barRatio: 0.66, series: single("Cumulative cash flow", cumulative) },
  { title: "Deals Closed per Month by Type", titleX: 269, plot: { left: 27, right: 517, top: 48, bottom: 240 }, min: 0, max: 8, step: 1, grid: [4], fmt: String, cats: months, hideCats: true, barRatio: 0.62, series: stack(closed1, closed2, closed3) },
  { title: "Active Deals Over Time", titleX: 269, plot: { left: 31, right: 518, top: 47, bottom: 238 }, min: 0, max: 70, step: 10, grid: [70], fmt: String, cats: months, hideCats: true, barRatio: 0.66, series: stack(act1, act2, act3) },
  { title: "Total Debt Balance Over Time by Deal Type", titleX: 265, plot: { left: 68, right: 518, top: 47, bottom: 238 }, min: 0, max: 35, step: 5, grid: [35], fmt: money(M), cats: months, hideCats: true, barRatio: 0.6, series: stack(debt1, debt2, debt3) },
];

/* ---------- title bar and ribbon tabs ---------- */

@customElement("title-bar")
class TitleBar extends LitElement {
  static styles = [base, css`
    :host { display: grid; grid-template-columns: 1fr 346px 1fr; align-items: center; height: 44px; padding-left: 14px; color: #808080; }
    .left, .right { display: flex; align-items: center; }
    .left { font-size: 11px; }
    .auto { font-size: 10px; margin: 0 5px 0 14px; }
    .toggle { width: 41px; height: 19px; border: 1px solid #8c8c8c; border-radius: 10px; background: #fff; padding: 0 5px 0 2px; justify-content: space-between; margin-right: 4px; }
    .knob { width: 14px; height: 14px; border-radius: 50%; background: #7d7d7d; }
    .w30 { width: 28px; } .w24 { width: 24px; } .w8 { width: 8px; }
    .doc { gap: 5px; margin-left: 14px; }
    .search { display: flex; align-items: center; gap: 12px; height: 31px; margin-top: 1px; padding: 0 13px; border: 1px solid #a6a6a6; border-bottom-color: #8f8f8f; border-radius: 4px; font-size: 12px; }
    .search input { flex: 1; height: 24px; outline: 0; }
    .search input::placeholder { color: #8d8d8d; opacity: 1; }
    .right { justify-content: flex-end; }
    .right button { width: 45px; height: 44px; }
    .avatar { width: 23px; height: 23px; border-radius: 50%; background: #063a34; color: #8fc7c9; font-size: 10px; line-height: 23px; }
  `];
  render() {
    return html`
      <div class="left">
        ${excelLogo(17)}
        <span class="auto" id="as">AutoSave</span>
        <button class="toggle" role="switch" aria-checked="false" aria-labelledby="as"><span class="knob"></span>Off</button>
        <button class="w30" aria-label="Save">${I.save()}</button>
        <button class="w24" aria-label="Undo">${I.undo()}</button><button class="w8" aria-label="Undo list">${chevThin(G)}</button>
        <button class="w30" aria-label="Redo">${I.redo()}</button><button class="w8" aria-label="Redo list">${chevThin(G)}</button>
        <button class="w30" aria-label="Customize toolbar">${I.custom()}</button>
        <button class="doc">Fix and Flip 10 Year ${chevBig(G)}</button>
      </div>
      <label class="search">${I.lens()}<input type="search" aria-label="Search" placeholder="Search" /></label>
      <div class="right">
        <button aria-label="Account"><span class="avatar">JV</span></button>
        <button aria-label="Tips">${I.bulb()}</button>
        <button aria-label="Minimize">${I.min()}</button>
        <button aria-label="Restore">${I.restore()}</button>
        <button aria-label="Close">${I.close()}</button>
      </div>`;
  }
}

const menus = ["File", "Home", "Insert", "Page Layout", "Formulas", "Data", "Review", "View", "Automate", "Developer", "Help", "Acrobat"];

@customElement("menu-tabs")
class MenuTabs extends LitElement {
  @state() private active = "Home";
  static styles = [base, css`
    :host { display: flex; align-items: center; justify-content: space-between; height: 31px; padding: 0 7px 0 9px; font-size: 12px; color: #111; }
    nav, .actions { display: flex; align-items: center; }
    nav button { height: 26px; padding: 0 10px; margin-top: 1px; }
    nav .on { font-weight: 700; position: relative; }
    nav .on::after { content: ""; position: absolute; left: 9px; right: 9px; bottom: 0; height: 3px; border-radius: 2px; background: #0c4a1c; }
    .actions { gap: 7px; }
    .pill { height: 23px; border-radius: 4px; gap: 3px; padding: 0 4px; font-weight: 600; font-size: 12px; }
    .comments { background: #fff; border: 1px solid #8f8f8f; }
    .share { background: #05340f; color: #b9dfbd; font-weight: 400; gap: 4px; }
    .who { width: 28px; height: 26px; }
  `];
  render() {
    return html`
      <nav>${menus.map((m) => html`<button class=${classMap({ on: m === this.active })} @click=${() => (this.active = m)}>${m}</button>`)}</nav>
      <div class="actions">
        <button class="pill comments">${I.comment()}Comments</button>
        <button class="pill share">${I.share()}Share ${chevThin("#b9dfbd")}</button>
        <button class="who" aria-label="Presence">${I.person()}</button>
      </div>`;
  }
}

/* ---------- ribbon ---------- */

@customElement("office-ribbon")
class OfficeRibbon extends LitElement {
  static styles = [base, css`
    :host { display: flex; height: 93px; margin: 0 8px; background: #fff; border-radius: 8px; box-shadow: 0 2px 1px #a2a2a2; color: #111; font-size: 11px; }
    .group { flex: none; display: flex; flex-direction: column; border-right: 1px solid #c8c8c8; margin: 4px 0; }
    .clip { width: 162px; } .font { width: 220px; } .align { width: 280px; } .num { width: 150px; } .styles { width: 369px; }
    .cells { width: 135px; } .edit { width: 202px; } .addins { width: 59px; } .data { width: 101px; } .acro { width: 74px; } .solv { width: 54px; }
    .rest { flex: 1; display: flex; justify-content: flex-end; align-items: flex-end; padding: 0 8px 9px 0; }
    .body { flex: 1; display: flex; min-height: 0; padding-left: 8px; }
    .styles .body, .edit .body { padding-left: 11px; }
    .align .body, .font .body { padding-left: 7px; }
    .cells .body, .acro .body { padding-left: 6px; }
    .solv .body { padding-left: 5px; }
    .foot { display: grid; grid-template-columns: 1fr; height: 12px; align-items: center; font-size: 10px; line-height: 12px; }
    .foot > * { grid-area: 1 / 1; }
    .foot span { justify-self: center; white-space: nowrap; }
    .foot button { justify-self: end; margin-right: 2px; }
    .big { flex-direction: column; justify-content: flex-start; line-height: 15px; padding-top: 4px; }
    .big .art { display: flex; align-items: center; justify-content: center; height: 28px; margin-bottom: 2px; }
    .big .cap { display: flex; align-items: center; gap: 4px; height: 15px; }
    .b44 { width: 44px; } .b60 { width: 62px; } .b50 { width: 41px; }
    .list { display: flex; flex-direction: column; padding-left: 2px; }
    .edit .list { width: 96px; padding-left: 0; }
    .list button { height: 23px; justify-content: flex-start; gap: 4px; }
    .list .push { margin-left: 11px; }
    .list .mark { width: 16px; display: flex; justify-content: center; }
    .rows { display: flex; flex-direction: column; gap: 6px; padding-top: 6px; }
    .row { display: flex; align-items: center; height: 24px; }
    .row button { height: 23px; }
    .row .high { padding-bottom: 5px; } .row .low { padding-top: 5px; }
    .w8 { width: 8px; } .w14 { width: 14px; } .w20 { width: 20px; } .w24 { width: 24px; }
    .sep { flex: none; width: 1px; height: 24px; background: #c8c8c8; margin: 0 4px; }
    .tight { margin: 0 1px 0 2px; }
    .tall { height: 58px; margin: 6px 8px 0 2px; }
    .combo { display: grid; align-items: center; height: 23px; border: 1px solid #6e6e6e; border-radius: 4px; }
    .combo > * { grid-area: 1 / 1; }
    .combo select { appearance: none; width: 100%; height: 21px; padding-left: 2px; }
    .combo .ic { justify-self: end; margin-right: 2px; pointer-events: none; }
    .c106 { width: 106px; margin-right: 3px; } .c47 { width: 47px; } .c135 { width: 135px; }
    .on { background: #d8d8d8; border: 1px solid #6e6e6e; border-radius: 4px; }
    .bold { font-weight: 700; font-size: 13px; } .ital { font-family: "Liberation Serif", serif; font-style: italic; font-size: 15px; } .und { text-decoration: underline; font-size: 13px; }
    .sym { font-size: 16px; } .row .comma { font: 900 28px/12px "Liberation Serif", serif; padding-bottom: 14px; }
    .dec { display: grid; grid-template-columns: auto auto; align-content: center; justify-content: end; font: 10px/10px "Liberation Sans", sans-serif; align-items: center; }
    .dec .full { grid-column: 1 / 3; text-align: right; }
    .wraps button { gap: 3px; justify-content: flex-start; width: 122px; }
    .wraps .end { margin-left: auto; }
    .gallery { display: grid; grid-template-columns: 200px 22px; height: 59px; margin: 6px 0 0 0; border: 1px solid #9b9b9b; border-radius: 5px; font-size: 12px; }
    .swatches { display: grid; grid-template-columns: 94px 94px; grid-auto-rows: 21px; gap: 6px; padding: 5px 0 0 3px; }
    .swatches button { justify-content: flex-start; padding-left: 4px; }
    .normal { outline: 1px solid #3c3c3c; outline-offset: 2px; background: #fff; color: #000; }
    .bad { background: #ff9c9c; color: #8a0f0a; } .good { background: #9cdb9c; color: #063f0c; } .neutral { background: #ffd751; color: #8a2b06; }
    .more { border: 1px solid #3c3c3c; margin: -1px; border-radius: 0 5px 5px 0; }
  `];

  private big(art: TemplateResult, lines: (string | TemplateResult)[], cls = "b44") {
    return html`<button class="big ${cls}"><span class="art">${art}</span>${lines.map((l) => html`<span class="cap">${l}</span>`)}</button>`;
  }
  private foot(name: string, launch = false) {
    return html`<div class="foot"><span>${name}</span>${launch ? html`<button aria-label="${name} settings">${launcher()}</button>` : nothing}</div>`;
  }
  private tool(label: string, body: unknown, cls: string) {
    return html`<button class=${cls} aria-label=${label} title=${label}>${body}</button>`;
  }

  render() {
    const t = this.tool;
    return html`
      <section class="group clip">
        <div class="body">
          ${this.big(I.paste(), ["Paste", chev()])}
          <div class="list">
            <button><span class="mark">${I.cut()}</span>Cut</button>
            <button><span class="mark">${I.copy()}</span>Copy<span class="push">${chev()}</span></button>
            <button><span class="mark">${I.painter()}</span>Format Painter</button>
          </div>
        </div>
        ${this.foot("Clipboard", true)}
      </section>

      <section class="group font">
        <div class="body"><div class="rows">
          <div class="row">
            <div class="combo c106"><select aria-label="Font"><option>Aptos Narrow</option></select>${chev()}</div>
            <div class="combo c47"><select aria-label="Font size"><option>11</option></select>${chev()}</div>
            ${t("Increase font size", I.grow(true), "w24")}${t("Decrease font size", I.grow(false), "w24")}
          </div>
          <div class="row">
            ${t("Bold", "B", "w24 bold")}${t("Italic", "I", "w24 ital")}${t("Underline", "U", "w20 und")}${t("Underline style", chev(), "w14")}
            <span class="sep"></span>${t("Borders", I.borders(), "w20")}${t("Border style", chev(), "w14")}
            <span class="sep"></span>${t("Fill color", I.fill(), "w20")}${t("Fill colors", chev(), "w14")}${t("Font color", I.fontColor(), "w24")}${t("Font colors", chev(), "w14")}
          </div>
        </div></div>
        ${this.foot("Font", true)}
      </section>

      <section class="group align">
        <div class="body">
          <div class="rows">
            <div class="row">
              ${t("Top align", I.lines([14, 10, 14], "c"), "w24 high")}${t("Middle align", I.lines([14, 10, 14], "c"), "w24")}${t("Bottom align", I.lines([14, 10, 14], "c"), "w24 on low")}
              <span class="sep tight"></span>${t("Orientation", I.orient(), "w24")}${t("Orientations", chev(), "w8")}
            </div>
            <div class="row">
              ${t("Align left", I.lines([14, 9, 14, 9], "l"), "w24")}${t("Center", I.lines([14, 9, 14, 9], "c"), "w24")}${t("Align right", I.lines([14, 9, 14, 9], "r"), "w24")}
              <span class="sep tight"></span>${t("Decrease indent", I.indent(true), "w24")}${t("Increase indent", I.indent(false), "w24")}
            </div>
          </div>
          <span class="sep tall"></span>
          <div class="rows wraps">
            <div class="row"><button>${I.wrap()}Wrap Text</button></div>
            <div class="row"><button>${I.merge()}Merge &amp; Center<span class="end">${chev()}</span></button></div>
          </div>
        </div>
        ${this.foot("Alignment", true)}
      </section>

      <section class="group num">
        <div class="body"><div class="rows">
          <div class="row"><div class="combo c135"><select aria-label="Number format"><option>General</option></select>${chev()}</div></div>
          <div class="row">
            ${t("Accounting format", "$", "w24 sym")}${t("Accounting formats", chev(), "w14")}${t("Percent style", "%", "w24 sym")}${t("Comma style", ",", "w24 comma")}
            <span class="sep tight"></span>
            ${t("Increase decimal", html`<span class="dec">${I.arrowL()}<span>0</span><span class="full">.00</span></span>`, "w24")}
            ${t("Decrease decimal", html`<span class="dec"><span class="full">.00</span>${I.arrowR()}<span>0</span></span>`, "w24")}
          </div>
        </div></div>
        ${this.foot("Number", true)}
      </section>

      <section class="group styles">
        <div class="body">
          ${this.big(I.condFmt(), ["Conditional", html`Formatting ${chev()}`], "b60")}
          ${this.big(I.fmtTable(), ["Format as", html`Table ${chev()}`], "b60")}
          <div class="gallery">
            <div class="swatches">
              <button class="normal">Normal</button><button class="bad">Bad</button>
              <button class="good">Good</button><button class="neutral">Neutral</button>
            </div>
            <button class="more" aria-label="More styles">${icon(8, 8, svg`<path d="M1 1h6M1.500 4 4 6.500 6.500 4" stroke=${K} stroke-width="1.300"/>`)}</button>
          </div>
        </div>
        ${this.foot("Styles")}
      </section>

      <section class="group cells">
        <div class="body">
          ${this.big(I.cells("insert"), ["Insert", chev()], "b50")}${this.big(I.cells("delete"), ["Delete", chev()], "b50")}${this.big(I.cells("format"), ["Format", chev()], "b50")}
        </div>
        ${this.foot("Cells")}
      </section>

      <section class="group edit">
        <div class="body">
          <div class="list">
            <button><span class="mark">${I.sigma()}</span>AutoSum<span class="push">${chev()}</span></button>
            <button><span class="mark">${I.fillDown()}</span>Fill ${chev()}</button>
            <button><span class="mark">${I.eraser()}</span>Clear ${chev()}</button>
          </div>
          ${this.big(I.sort(), ["Sort &", html`Filter ${chev()}`])}${this.big(I.find(), ["Find &", html`Select ${chev()}`])}
        </div>
        ${this.foot("Editing")}
      </section>

      <section class="group addins"><div class="body">${this.big(I.addins(), ["Add-ins"])}</div>${this.foot("Add-ins")}</section>
      <section class="group data"><div class="body">${this.big(I.analyze(), ["Analyze", "Data"])}${this.big(I.copilot(), ["Copilot"])}</div>${this.foot("")}</section>
      <section class="group acro"><div class="body">${this.big(I.pdf(), ["Create", "a PDF"], "b60")}</div>${this.foot("Adobe Acrobat")}</section>
      <section class="group solv"><div class="body">${this.big(I.solver(), ["Solver"])}</div>${this.foot("Solver")}</section>
      <div class="rest"><button aria-label="Collapse ribbon">${chevBig()}</button></div>`;
  }
}

/* ---------- formula bar ---------- */

@customElement("formula-bar")
class FormulaBar extends LitElement {
  static styles = [base, css`
    :host { display: flex; align-items: center; height: 22px; margin: 8px 8px 5px; font-size: 13px; color: #1b1b1b; }
    .box { display: flex; align-items: center; height: 22px; background: #fff; border: 1px solid #c0c0c0; border-radius: 4px; }
    .name { width: 95px; padding: 0 3px 0 4px; }
    .name input { flex: 1; width: 0; height: 20px; outline: 0; font-size: 12px; }
    .grip { width: 18px; display: flex; justify-content: center; }
    .fx { width: 81px; justify-content: space-around; margin-right: 4px; padding: 0 1px 0 3px; }
    .fn { font: italic 700 17px "Liberation Serif", serif; }
    .text { flex: 1; padding-right: 3px; }
    .text input { flex: 1; height: 20px; outline: 0; }
  `];
  render() {
    return html`
      <div class="box name"><input aria-label="Name box" value="AF29" /><button aria-label="Names">${chevBig()}</button></div>
      <span class="grip">${I.dots()}</span>
      <div class="box fx">
        <button aria-label="Cancel">${I.cancel()}</button><button aria-label="Enter">${I.check()}</button>
        <button class="fn" aria-label="Insert function">fx</button><button aria-label="Functions">${chevBig(G)}</button>
      </div>
      <div class="box text"><input aria-label="Formula" /><button aria-label="Expand formula bar">${chevBig()}</button></div>`;
  }
}

/* ---------- worksheet ---------- */

const colName = (i: number) => (i < 26 ? "" : "A") + String.fromCharCode(65 + (i % 26));

@customElement("work-sheet")
class WorkSheet extends LitElement {
  static styles = [base, css`
    :host { display: grid; grid-template-columns: 26px minmax(0, 1fr) 20px; grid-template-rows: 18px minmax(0, 1fr); color: #222; font-size: 12px; overflow: hidden; }
    .corner { display: flex; justify-content: flex-end; align-items: flex-end; padding: 0 3px 1px 0; }
    .cols { display: flex; overflow: hidden; border-bottom: 1px solid #9c9c9c; }
    .cols span { flex: 0 0 54px; text-align: center; line-height: 17px; padding-right: 1px; background: linear-gradient(#b0b0b0, #b0b0b0) right bottom / 1px 5px no-repeat; }
    .rows { overflow: hidden; border-right: 1px solid #a9a9a9; }
    .rows span { display: block; height: 16px; line-height: 17px; text-align: center; background: linear-gradient(#b0b0b0, #b0b0b0) right bottom / 12px 1px no-repeat; }
    .rows span:nth-child(even) { height: 17px; }
    .canvas { background: #fff; overflow: hidden; padding-top: 2px; }
    .charts { display: grid; grid-template-columns: repeat(3, 540px); grid-auto-rows: 300px; }
    .scroll { grid-row: 1 / 3; grid-column: 3; display: flex; flex-direction: column; align-items: center; padding: 5px 0 2px; justify-content: space-between; }
    .thumb { width: 10px; height: 306px; border-radius: 5px; background: #2f2f2f; }
    .top { display: flex; flex-direction: column; align-items: center; gap: 2px; }
  `];
  render() {
    return html`
      <div class="corner">${icon(10, 10, svg`<path d="M10 0v10H0z" fill="#b0b0b0"/>`)}</div>
      <div class="cols">${Array.from({ length: 35 }, (_, i) => html`<span>${colName(i)}</span>`)}</div>
      <div class="rows">${Array.from({ length: 46 }, (_, i) => html`<span>${i + 1}</span>`)}</div>
      <div class="canvas"><div class="charts">${charts.map((c) => html`<bar-chart .spec=${c}></bar-chart>`)}</div></div>
      <div class="scroll"><div class="top">${I.triU()}<div class="thumb"></div></div>${I.triD()}</div>`;
  }
}

/* ---------- sheet tabs and status bar ---------- */

const sheets: [string, string][] = [
  ["Index", "white"], ["Global", "yellow"], ["Deal Assumptions", "yellow"], ["Executive Summary", "purple"],
  ["Waterfall Monthly", "purple"], ["Waterfall Annual", "purple"], ["DCF Analysis", "purple"], ["Visuals", "current"],
  ["M1", "plain"], ["M2", "plain"], ["M3", "plain"], ["OPEX", "yellow"], ["Loan", "yellow"],
  ["Other Startup Costs", "yellow"], ["Monthly Pro Forma", "purple"], ["Annual Pro Forma", "purple"],
];

@customElement("sheet-tabs")
class SheetTabs extends LitElement {
  static styles = [base, css`
    :host { display: flex; align-items: center; height: 31px; border-bottom: 1px solid #fff; font-size: 12px; color: #111; }
    .nav { display: flex; width: 103px; padding-left: 22px; gap: 23px; }
    .tabs { display: flex; align-items: center; }
    .tab { display: flex; align-items: center; padding: 0 3px; border-right: 1px solid #bdbdbd; height: 18px; }
    .tab button { height: 24px; padding: 0 9px; border-radius: 4px; }
    .white button { background: #fff; } .yellow button { background: #ffff99; padding: 0 10px; }
    .purple button { background: #31074f; color: #d9c8ea; border: 1px solid #5a2b85; padding: 0 11px; }
    .current button { height: 27px; padding: 0 5px 4px; font-weight: 700; background: linear-gradient(#fff 0 10%, #d9b8e0 35%, #9a72b6 65%); position: relative; }
    .current button::after { content: ""; position: absolute; left: 6px; right: 6px; bottom: 2px; height: 2px; background: #0c4a1c; }
    .add { margin-left: 38px; }
    .h { margin-left: auto; display: flex; align-items: center; gap: 5px; padding-right: 21px; }
    .bar { width: 100px; height: 9px; border-radius: 5px; background: #2f2f2f; }
    .dots { margin-right: 12px; }
  `];
  render() {
    return html`
      <div class="nav"><button aria-label="Previous sheets">${I.navL()}</button><button aria-label="Next sheets">${I.navR()}</button></div>
      <div class="tabs">${sheets.map(([n, c]) => html`<span class="tab ${c}"><button>${n}</button></span>`)}</div>
      <button class="add" aria-label="New sheet">${I.plus()}</button>
      <div class="h"><span class="dots">${I.dots()}</span>${I.triL()}<span class="bar"></span>${I.triR()}</div>`;
  }
}

@customElement("status-bar")
class StatusBar extends LitElement {
  static styles = [base, css`
    :host { display: flex; align-items: center; height: 19px; font-size: 10px; color: #222; padding: 0 13px 0 10px; border-bottom: 1px solid #9aa0a2; }
    .macro { margin: 0 15px 0 19px; }
    .acc { gap: 4px; font-weight: 700; }
    .views { margin-left: auto; display: flex; }
    .views button { width: 38px; height: 18px; }
    .views .on { background: #bcbcbc; }
    .zoom { display: flex; align-items: center; gap: 2px; margin-left: 2px; }
    input[type="range"] { appearance: none; width: 94px; height: 14px; background: linear-gradient(#444, #444) center / 100% 1px no-repeat; }
    input[type="range"]::-webkit-slider-thumb { appearance: none; width: 5px; height: 12px; background: #222; }
    .pm { width: 12px; height: 18px; font-size: 14px; line-height: 18px; }
    .pct { margin-left: 10px; }
  `];
  render() {
    return html`
      <span>Ready</span>
      <button class="macro" aria-label="Record macro">${I.macro()}</button>
      <button class="acc">${I.access()}Accessibility: Investigate</button>
      <div class="views">
        <button class="on" aria-label="Normal view">${I.viewNormal()}</button>
        <button aria-label="Page layout view">${I.viewPage()}</button>
        <button aria-label="Page break view">${I.viewBreak()}</button>
      </div>
      <div class="zoom">
        <button class="pm" aria-label="Zoom out">−</button>
        <input type="range" min="0" max="100" value="44" aria-label="Zoom" />
        <button class="pm" aria-label="Zoom in">+</button>
      </div>
      <span class="pct">90%</span>`;
  }
}

/* ---------- taskbar ---------- */

@customElement("task-bar")
class TaskBar extends LitElement {
  static styles = [base, css`
    :host { display: grid; grid-template-columns: 1fr auto 1fr; align-items: center; height: 45px; background: #9acbdb; color: #1c1c1c; font-size: 11px; line-height: 15px; }
    .weather { display: flex; align-items: center; gap: 3px; padding-left: 19px; justify-self: start; text-align: left; }
    .sky { position: relative; margin-top: -4px; }
    .badge { position: absolute; top: 2px; right: -2px; width: 16px; height: 16px; border-radius: 50%; background: #b01e12; color: #f3c6bd; text-align: center; line-height: 16px; font-size: 11px; }
    .apps { display: flex; align-items: center; margin-right: 5px; }
    .app { width: 41px; height: 45px; position: relative; }
    .app.run::after { content: ""; position: absolute; bottom: 4px; left: 17px; width: 6px; height: 3px; border-radius: 2px; background: #4a5358; }
    .start { width: 48px; }
    .search { display: flex; align-items: center; gap: 9px; width: 205px; height: 29px; padding: 0 3px 0 10px; border-radius: 15px; background: #dafcff; margin-right: 3px; }
    .search input { flex: 1; width: 0; height: 24px; outline: 0; font-size: 12px; }
    .search input::placeholder { color: #333; opacity: 1; }
    .tray { display: flex; align-items: center; justify-self: end; padding-right: 18px; gap: 3px; }
    .more { margin-right: 13px; }
    time { text-align: right; margin-left: 4px; }
    .sound { margin-right: 7px; }
  `];
  render() {
    const apps: [string, TemplateResult, boolean][] = [
      ["Task view", I.taskView(), false], ["Files", I.folder(), false], ["Opera", I.opera(), true], ["Chrome", I.chrome(), true],
      ["Snipping tool", I.snip(), false], ["Notepad", I.notepad(), true], ["Excel", excelLogo(23), true],
    ];
    return html`
      <button class="weather"><span class="sky">${I.sun()}<span class="badge">8</span></span><span>83°F<br />Mostly sunny</span></button>
      <div class="apps">
        <button class="start" aria-label="Start">${I.winLogo()}</button>
        <label class="search">${I.lensBold()}<input type="search" aria-label="Search the computer" placeholder="Search" />${I.van()}</label>
        ${apps.map(([n, a, run]) => html`<button class="app ${classMap({ run })}" aria-label=${n}>${a}</button>`)}
      </div>
      <div class="tray">
        <button class="more" aria-label="Hidden icons">${I.up()}</button>
        <button aria-label="Network">${I.net()}</button>
        <button class="sound" aria-label="Volume">${I.mute()}</button>
        <time>7:28 PM<br />6/21/2025</time>
      </div>`;
  }
}

@customElement("app-root")
class AppRoot extends LitElement {
  static styles = css`
    :host { display: flex; flex-direction: column; height: 100vh; overflow: hidden; background: #dadada; font-family: "Open Sans", "Noto Sans", sans-serif; }
    work-sheet { flex: 1; min-height: 0; }
    title-bar, menu-tabs, office-ribbon, formula-bar, sheet-tabs, status-bar, task-bar { flex: none; }
  `;
  render() {
    return html`
      <title-bar></title-bar>
      <menu-tabs></menu-tabs>
      <office-ribbon></office-ribbon>
      <formula-bar></formula-bar>
      <work-sheet></work-sheet>
      <sheet-tabs></sheet-tabs>
      <status-bar></status-bar>
      <task-bar></task-bar>`;
  }
}
